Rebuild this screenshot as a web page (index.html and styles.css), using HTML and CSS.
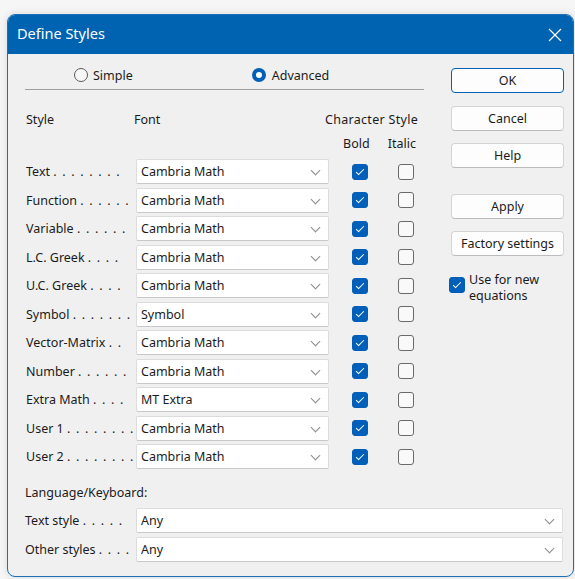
FILE: index.html
```html
<!DOCTYPE html>
<html lang="en">
  <head>
    <meta charset="UTF-8" />
    <meta name="viewport" content="width=device-width, initial-scale=1.0" />
    <title>Define Styles</title>
    <link rel="stylesheet" href="styles.css">
  </head>
  <body>
    <div class="dialog">
      <div class="titlebar">
        <span class="title">Define Styles</span>
        <svg class="close" width="14" height="14" viewBox="0 0 14 14">
          <path d="M1 1L13 13M13 1L1 13" stroke="#fff" stroke-width="1.2" fill="none" />
        </svg>
      </div>

      <div class="body">
        <div class="top">
          <div class="main">
            <div class="mode">
              <label class="radio simple"><span class="dot"></span>Simple</label>
              <label class="radio advanced on"><span class="dot"></span>Advanced</label>
            </div>

            <div class="head">
              <span class="c-style">Style</span>
              <span class="c-font">Font</span>
              <span class="c-char">Character Style</span>
            </div>
            <div class="subhead">
              <span class="c-bold">Bold</span>
              <span class="c-italic">Italic</span>
            </div>

            <div class="rows" id="rows"></div>
          </div>

          <div class="side">
            <button class="btn default">OK</button>
            <button class="btn">Cancel</button>
            <button class="btn">Help</button>
            <button class="btn apply">Apply</button>
            <button class="btn">Factory settings</button>
            <label class="newuse">
              <span class="check on"></span>
              <span>Use for new<br>equations</span>
            </label>
          </div>
        </div>

        <div class="lang">
          <div class="lang-title">Language/Keyboard:</div>
          <div class="lang-row">
            <span class="label">Text style <span class="dots">. . . . .</span></span>
            <div class="select wide">Any</div>
          </div>
          <div class="lang-row">
            <span class="label">Other styles <span class="dots">. . . .</span></span>
            <div class="select wide">Any</div>
          </div>
        </div>
      </div>
    </div>

    <script>
      var styles = [
        ["Text", 8, "Cambria Math"],
        ["Function", 6, "Cambria Math"],
        ["Variable", 6, "Cambria Math"],
        ["L.C. Greek", 4, "Cambria Math"],
        ["U.C. Greek", 4, "Cambria Math"],
        ["Symbol", 7, "Symbol"],
        ["Vector-Matrix", 2, "Cambria Math"],
        ["Number", 6, "Cambria Math"],
        ["Extra Math", 4, "MT Extra"],
        ["User 1", 8, "Cambria Math"],
        ["User 2", 8, "Cambria Math"]
      ];

      var rows = document.getElementById("rows");
      styles.forEach(function (s) {
        var dots = new Array(s[1] + 1).join(". ").trim();
        var row = document.createElement("div");
        row.className = "row";
        row.innerHTML =
          '<span class="label">' + s[0] + ' <span class="dots">' + dots + '</span></span>' +
          '<div class="select">' + s[2] + '</div>' +
          '<span class="cell bold"><span class="check on"></span></span>' +
          '<span class="cell"><span class="check"></span></span>';
        rows.appendChild(row);
      });
    </script>
  </body>
</html>
```

FILE: styles.css
```css
html, body {
  margin: 0;
  height: 100%;
  overflow: hidden;
}

body {
  background: #f6f6f6;
  font-family: "Noto Sans", "Open Sans", sans-serif;
  font-size: 12.5px;
  color: #1b1b1b;
}

.dialog {
  margin: 14px 0 0 7px;
  width: 567px;
  height: 563px;
  background: #f0f0f0;
  border: 1px solid #1f6fb8;
  border-radius: 8px;
  box-shadow: 0 0 8px rgba(0, 0, 0, 0.12);
  overflow: hidden;
  box-sizing: border-box;
}

.titlebar {
  height: 39px;
  background: #0063b1;
  display: flex;
  align-items: center;
  justify-content: space-between;
  padding: 0 11px 3px 9px;
  box-sizing: border-box;
}

.title {
  color: #fff;
  font-size: 14.5px;
}

.close {
  margin-top: 3px;
}

.body {
  padding: 0 0 0 17px;
}

.top {
  display: flex;
}

.main {
  width: 399px;
  flex-shrink: 0;
}

/* simple / advanced */
.mode {
  height: 36px;
  padding-top: 7px;
  box-sizing: border-box;
  border-bottom: 1px solid #a0a0a0;
  display: flex;
  align-items: center;
  margin-bottom: 17px;
}

.radio {
  display: flex;
  align-items: center;
  gap: 5px;
}

.radio.simple {
  margin-left: 49px;
}

.radio.advanced {
  margin-left: 119px;
}

.dot {
  width: 12px;
  height: 12px;
  border: 1px solid #5a5a5a;
  border-radius: 50%;
  background: #f7f7f7;
  box-sizing: content-box;
}

.radio.on .dot {
  width: 6px;
  height: 6px;
  border: 4px solid #005fb8;
  background: #fff;
  margin-right: 1px;
}

.head, .subhead {
  display: flex;
  align-items: center;
  height: 24px;
}

.c-style {
  width: 109px;
  padding-left: 1px;
}

.c-font {
  width: 193px;
}

.c-char {
  width: 100px;
  letter-spacing: 0.3px;
}

.c-bold {
  margin-left: 318px;
  width: 46px;
}

.c-italic {
  width: 40px;
  padding-left: 3px;
}

.rows {
  margin-top: 4px;
}

.row {
  display: flex;
  align-items: center;
  height: 25px;
  margin-bottom: 3.5px;
}

.label {
  width: 111px;
  flex-shrink: 0;
  padding-left: 1px;
  box-sizing: border-box;
  white-space: nowrap;
}

.dots {
  letter-spacing: 1.2px;
}

.select {
  width: 193px;
  flex-shrink: 0;
  height: 25px;
  box-sizing: border-box;
  background: #fff;
  border: 1px solid #dcdcdc;
  border-bottom-color: #c8c8c8;
  border-radius: 2px;
  padding-left: 4px;
  display: flex;
  align-items: center;
  position: relative;
}

.select::after {
  content: "";
  position: absolute;
  right: 9px;
  top: 7px;
  width: 6px;
  height: 6px;
  border-right: 1px solid #8a8a8a;
  border-bottom: 1px solid #8a8a8a;
  transform: rotate(45deg);
}

.cell {
  width: 46px;
  flex-shrink: 0;
  display: flex;
  justify-content: center;
}

.cell.bold {
  margin-left: 8px;
}

.check {
  width: 14px;
  height: 14px;
  flex-shrink: 0;
  border: 1px solid #6a6a6a;
  border-radius: 3px;
  background: #f9f9f9;
  display: inline-block;
  position: relative;
}

.check.on {
  background: #005fb8;
  border-color: #005fb8;
}

.check.on::after {
  content: "";
  position: absolute;
  left: 5px;
  top: 2px;
  width: 3px;
  height: 7px;
  border-right: 1.2px solid #fff;
  border-bottom: 1.2px solid #fff;
  transform: rotate(45deg);
}

/* buttons column */
.side {
  margin-left: 27px;
  padding-top: 14px;
  display: flex;
  flex-direction: column;
  width: 113px;
}

.btn {
  height: 25px;
  background: #fdfdfd;
  border: 1px solid #d4d4d4;
  border-bottom-color: #bcbcbc;
  border-radius: 4px;
  font-family: inherit;
  font-size: 12.5px;
  color: #1b1b1b;
  padding: 0;
  margin-bottom: 12px;
}

.btn.default {
  border: 1px solid #005fb8;
  margin-bottom: 13px;
}

.btn.apply {
  margin-top: 14px;
}

.newuse {
  display: flex;
  align-items: flex-start;
  gap: 4px;
  margin: 4px 0 0 -2px;
  line-height: 16px;
}

.newuse .check {
  margin-top: 5px;
}

/* language / keyboard */
.lang {
  margin-top: 13px;
}

.lang-title {
  height: 22px;
  line-height: 14px;
}

.lang-row {
  display: flex;
  align-items: center;
  height: 25px;
  margin-bottom: 4px;
}

.lang-row .label {
  width: 111px;
  padding-left: 0;
}

.lang-row .dots {
  letter-spacing: 1.2px;
}

.select.wide {
  width: 427px;
}
```
